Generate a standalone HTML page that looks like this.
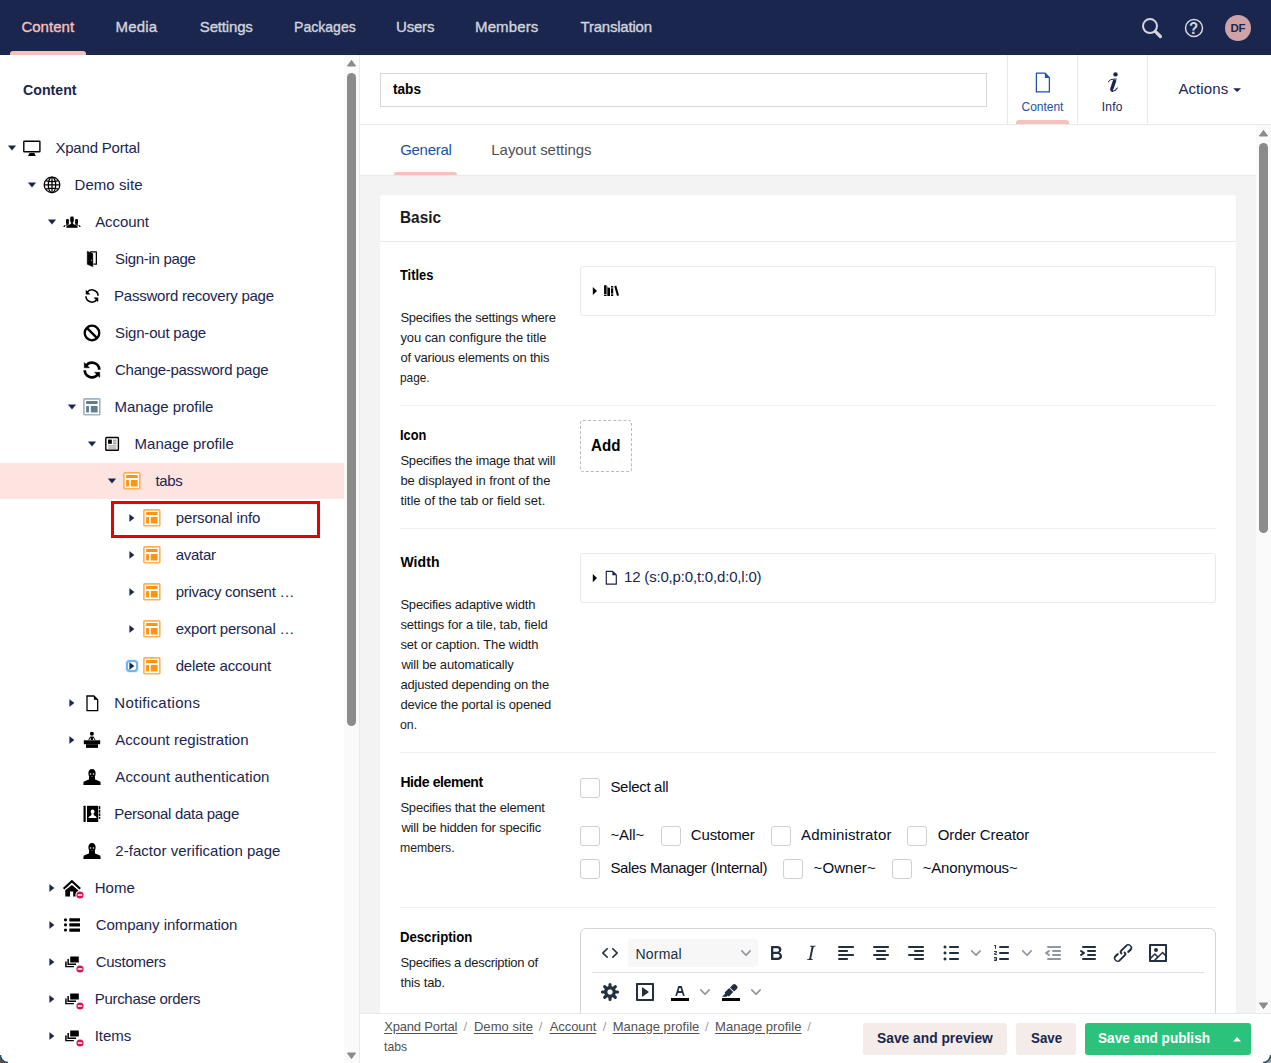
<!DOCTYPE html>
<html><head><meta charset="utf-8"><title>tabs - Umbraco</title>
<style>
*{box-sizing:border-box;margin:0;padding:0}
html,body{width:1271px;height:1063px;overflow:hidden;background:#fff;font-family:"Liberation Sans",sans-serif;}
body{position:relative}
.a{position:absolute}
.t{position:absolute;white-space:pre;line-height:20px;font-family:"Liberation Sans",sans-serif;}
svg{position:absolute;overflow:visible}
.cb{position:absolute;width:20px;height:20px;border:1px solid #d0d0d2;border-radius:3px;background:#fff}
.hl{position:absolute;height:1px;background:#f0f0f2;left:400px;width:816px}
.box{position:absolute;left:580px;width:636px;height:50px;border:1px solid #e9e9eb;border-radius:3px;background:#fff}

</style></head>
<body>
<!-- top bar -->
<div class="a" style="left:0;top:0;width:1271px;height:55px;background:#1b264f"></div>
<div class="a" style="left:10px;top:51px;width:76px;height:4px;background:#f5c1bc;border-radius:3px 3px 0 0"></div>
<!-- sidebar -->
<div class="a" style="left:0;top:55px;width:360px;height:1008px;background:#fff"></div>
<div class="a" style="left:0;top:463px;width:344px;height:36px;background:#fee4e1"></div>
<div class="a" style="left:344px;top:55px;width:15px;height:1008px;background:#fafafa"></div>
<div class="a" style="left:347px;top:73px;width:9px;height:653px;background:#8b8b8b;border-radius:4.5px"></div>
<div class="a" style="left:359px;top:55px;width:1px;height:1008px;background:#e9e9eb"></div>
<div class="a" style="left:111px;top:501px;width:209px;height:36.7px;border:3px solid #e50004"></div>
<!-- main bg -->
<div class="a" style="left:360px;top:176px;width:897px;height:838px;background:#f4f3f4"></div>
<!-- editor header -->
<div class="a" style="left:360px;top:55px;width:911px;height:69px;background:#fff"></div>
<div class="a" style="left:360px;top:124px;width:911px;height:1px;background:#e9e9eb"></div>
<div class="a" style="left:380px;top:73px;width:607px;height:34px;border:1px solid #d8d7d9;background:#fff"></div>
<div class="a" style="left:1007px;top:55px;width:1px;height:69px;background:#e9e9eb"></div>
<div class="a" style="left:1077px;top:55px;width:1px;height:69px;background:#e9e9eb"></div>
<div class="a" style="left:1147px;top:55px;width:1px;height:69px;background:#e9e9eb"></div>
<div class="a" style="left:1016px;top:120px;width:53px;height:4px;background:#f5c1bc;border-radius:3px 3px 0 0"></div>
<!-- tabs row -->
<div class="a" style="left:360px;top:125px;width:897px;height:50px;background:#fff"></div>
<div class="a" style="left:360px;top:175px;width:897px;height:1px;background:#e9e9eb"></div>
<div class="a" style="left:394px;top:172px;width:63px;height:3px;background:#f5c1bc;border-radius:3px 3px 0 0"></div>
<!-- right scrollbar -->
<div class="a" style="left:1256px;top:125px;width:15px;height:889px;background:#fafafa"></div>
<div class="a" style="left:1259px;top:143px;width:9px;height:390px;background:#8b8b8b;border-radius:4.5px"></div>
<!-- card -->
<div class="a" style="left:380px;top:195px;width:856px;height:830px;background:#fff;border-radius:3px"></div>
<div class="a" style="left:380px;top:241px;width:856px;height:1px;background:#e9e9eb"></div>
<div class="box" style="top:266px"></div>
<div class="hl" style="top:405px"></div>
<div class="a" style="left:580px;top:420px;width:52px;height:52px;border:1px dashed #bbbabf;border-radius:3px"></div>
<div class="hl" style="top:528px"></div>
<div class="box" style="top:553px"></div>
<div class="hl" style="top:752px"></div>
<div class="cb" style="left:580px;top:778px"></div>
<div class="cb" style="left:580px;top:826px"></div>
<div class="cb" style="left:661px;top:826px"></div>
<div class="cb" style="left:771px;top:826px"></div>
<div class="cb" style="left:907px;top:826px"></div>
<div class="cb" style="left:580px;top:859px"></div>
<div class="cb" style="left:783px;top:859px"></div>
<div class="cb" style="left:892px;top:859px"></div>
<div class="hl" style="top:907px"></div>
<!-- RTE -->
<div class="a" style="left:580px;top:928px;width:636px;height:120px;border:1px solid #d4d4d4;border-radius:6px;background:#fff"></div>
<div class="a" style="left:592px;top:972px;width:612px;height:1px;background:#e0e0e0"></div>
<div class="a" style="left:628px;top:939px;width:130px;height:28px;background:#f7f7f7;border-radius:3px"></div>
<!-- footer -->
<div class="a" style="left:360px;top:1014px;width:911px;height:49px;background:#fff"></div>
<div class="a" style="left:360px;top:1013px;width:911px;height:1px;background:#e9e9eb"></div>
<div class="a" style="left:863px;top:1023px;width:144px;height:32px;background:#f3ece8;border-radius:3px"></div>
<div class="a" style="left:1016px;top:1023px;width:60px;height:32px;background:#f3ece8;border-radius:3px"></div>
<div class="a" style="left:1085px;top:1023px;width:166px;height:32px;background:#2bc37c;border-radius:3px"></div>
<!-- ICONS -->
<div class="a" style="left:0;top:1055px;width:8px;height:8px;background:radial-gradient(circle at 8px 0px, rgba(0,0,0,0) 6.3px, #1a5570 7.2px, #1a5570 7.9px, #6e4a3e 8.8px)"></div>
<div class="a" style="left:1263px;top:1055px;width:8px;height:8px;background:radial-gradient(circle at 0px 0px, rgba(0,0,0,0) 6.3px, #1a5570 7.2px, #1a5570 7.9px, #a9a5a5 8.8px)"></div>
<svg style="left:7px;top:143.5px" width="10" height="8" viewBox="0 0 10 8" ><path d="M1.3 1.7 L8.7 1.7 L5 6.3 Z" fill="#1b264f" stroke="#1b264f" stroke-width="0.4" stroke-linejoin="round"/></svg>
<svg style="left:27px;top:180.5px" width="10" height="8" viewBox="0 0 10 8" ><path d="M1.3 1.7 L8.7 1.7 L5 6.3 Z" fill="#1b264f" stroke="#1b264f" stroke-width="0.4" stroke-linejoin="round"/></svg>
<svg style="left:47px;top:217.5px" width="10" height="8" viewBox="0 0 10 8" ><path d="M1.3 1.7 L8.7 1.7 L5 6.3 Z" fill="#1b264f" stroke="#1b264f" stroke-width="0.4" stroke-linejoin="round"/></svg>
<svg style="left:67px;top:402.5px" width="10" height="8" viewBox="0 0 10 8" ><path d="M1.3 1.7 L8.7 1.7 L5 6.3 Z" fill="#1b264f" stroke="#1b264f" stroke-width="0.4" stroke-linejoin="round"/></svg>
<svg style="left:87px;top:439.5px" width="10" height="8" viewBox="0 0 10 8" ><path d="M1.3 1.7 L8.7 1.7 L5 6.3 Z" fill="#1b264f" stroke="#1b264f" stroke-width="0.4" stroke-linejoin="round"/></svg>
<svg style="left:107px;top:476.5px" width="10" height="8" viewBox="0 0 10 8" ><path d="M1.3 1.7 L8.7 1.7 L5 6.3 Z" fill="#1b264f" stroke="#1b264f" stroke-width="0.4" stroke-linejoin="round"/></svg>
<div class="a" style="left:126px;top:660px;width:12px;height:12px;border:2px solid #6fb6f3;border-radius:4px;background:#fff;box-shadow:0 0 1.5px #6fb6f3"></div>
<svg style="left:128px;top:513.0px" width="8" height="10" viewBox="0 0 8 10" ><path d="M1.6 1.6 L6.1 5 L1.6 8.4 Z" fill="#1b264f" stroke="#1b264f" stroke-width="0.4" stroke-linejoin="round"/></svg>
<svg style="left:128px;top:550.0px" width="8" height="10" viewBox="0 0 8 10" ><path d="M1.6 1.6 L6.1 5 L1.6 8.4 Z" fill="#1b264f" stroke="#1b264f" stroke-width="0.4" stroke-linejoin="round"/></svg>
<svg style="left:128px;top:587.0px" width="8" height="10" viewBox="0 0 8 10" ><path d="M1.6 1.6 L6.1 5 L1.6 8.4 Z" fill="#1b264f" stroke="#1b264f" stroke-width="0.4" stroke-linejoin="round"/></svg>
<svg style="left:128px;top:624.0px" width="8" height="10" viewBox="0 0 8 10" ><path d="M1.6 1.6 L6.1 5 L1.6 8.4 Z" fill="#1b264f" stroke="#1b264f" stroke-width="0.4" stroke-linejoin="round"/></svg>
<svg style="left:128px;top:661.0px" width="8" height="10" viewBox="0 0 8 10" ><path d="M1.6 1.6 L6.1 5 L1.6 8.4 Z" fill="#1b264f" stroke="#1b264f" stroke-width="0.4" stroke-linejoin="round"/></svg>
<svg style="left:68px;top:698.0px" width="8" height="10" viewBox="0 0 8 10" ><path d="M1.6 1.6 L6.1 5 L1.6 8.4 Z" fill="#1b264f" stroke="#1b264f" stroke-width="0.4" stroke-linejoin="round"/></svg>
<svg style="left:68px;top:735.0px" width="8" height="10" viewBox="0 0 8 10" ><path d="M1.6 1.6 L6.1 5 L1.6 8.4 Z" fill="#1b264f" stroke="#1b264f" stroke-width="0.4" stroke-linejoin="round"/></svg>
<svg style="left:48px;top:883.0px" width="8" height="10" viewBox="0 0 8 10" ><path d="M1.6 1.6 L6.1 5 L1.6 8.4 Z" fill="#1b264f" stroke="#1b264f" stroke-width="0.4" stroke-linejoin="round"/></svg>
<svg style="left:48px;top:920.0px" width="8" height="10" viewBox="0 0 8 10" ><path d="M1.6 1.6 L6.1 5 L1.6 8.4 Z" fill="#1b264f" stroke="#1b264f" stroke-width="0.4" stroke-linejoin="round"/></svg>
<svg style="left:48px;top:957.0px" width="8" height="10" viewBox="0 0 8 10" ><path d="M1.6 1.6 L6.1 5 L1.6 8.4 Z" fill="#1b264f" stroke="#1b264f" stroke-width="0.4" stroke-linejoin="round"/></svg>
<svg style="left:48px;top:994.0px" width="8" height="10" viewBox="0 0 8 10" ><path d="M1.6 1.6 L6.1 5 L1.6 8.4 Z" fill="#1b264f" stroke="#1b264f" stroke-width="0.4" stroke-linejoin="round"/></svg>
<svg style="left:48px;top:1031.0px" width="8" height="10" viewBox="0 0 8 10" ><path d="M1.6 1.6 L6.1 5 L1.6 8.4 Z" fill="#1b264f" stroke="#1b264f" stroke-width="0.4" stroke-linejoin="round"/></svg>
<svg style="left:22px;top:139px" width="20" height="18" viewBox="0 0 20 18" ><rect x="1.8" y="2.2" width="16.1" height="10.5" rx="0.5" fill="none" stroke="#000" stroke-width="1.4"/><path d="M7.6 14 L12.2 14 L13.8 16.9 L6 16.9 Z" fill="#000"/></svg>
<svg style="left:42px;top:175px" width="20" height="20" viewBox="0 0 20 20" ><g fill="none" stroke="#000" stroke-width="1.25"><circle cx="10" cy="9.9" r="7.8"/><ellipse cx="10" cy="9.9" rx="3.7" ry="7.8"/><path d="M10 2.1V17.7M2.2 9.9H17.8M3.6 5.6Q10 7.6 16.4 5.6M3.6 14.2Q10 12.2 16.4 14.2"/></g></svg>
<svg style="left:62px;top:214px" width="20" height="16" viewBox="0 0 20 16" ><g fill="#000">
<rect x="4" y="5" width="2.9" height="4.9" rx="1.2"/><rect x="13.1" y="5" width="2.9" height="4.9" rx="1.2"/>
<path d="M4.4 9.6 H6.6 L7.4 11 L4 12 Z"/><path d="M15.6 9.6 H13.4 L12.6 11 L16 12 Z"/>
<path d="M1.1 12.8 L2.3 11.2 L3.7 10.9 L2.7 13 Z"/><path d="M18.9 12.8 L17.7 11.2 L16.3 10.9 L17.3 13 Z"/>
<path stroke="#fff" stroke-width="0.55" d="M7.9 4 Q7.9 2.1 10 2.1 Q12.1 2.1 12.1 4 V7 Q12.1 7.8 11.3 8.1 V9.8 L14.6 11.2 Q15.9 11.7 15.9 12.8 V14.1 H4.1 V12.8 Q4.1 11.7 5.4 11.2 L8.7 9.8 V8.1 Q7.9 7.8 7.9 7 Z"/>
</g></svg>
<svg style="left:86px;top:250px" width="13" height="18" viewBox="0 0 13 18" ><path d="M4 1.75 H10.35 V14.15 H7.4" fill="none" stroke="#000" stroke-width="1.25" stroke-linejoin="round"/><path d="M1.2 1.2 L6.9 3.6 V16.8 L1.2 14.3 Z" fill="#000" stroke="#000" stroke-width="0.4" stroke-linejoin="round"/><ellipse cx="5.5" cy="10.2" rx="0.5" ry="0.8" fill="#aaa"/></svg>
<svg style="left:0px;top:0px" width="1" height="1" viewBox="0 0 1 1" ><path d="M87.19 292.24 A6.1 6.1 0 0 1 98.10 295.70" fill="none" stroke="#000" stroke-width="1.6"/><path d="M86.00 290.30 V294.20 H89.90 Z" fill="#000" stroke="#000" stroke-width="0.5" stroke-linejoin="round"/><path d="M96.81 299.76 A6.1 6.1 0 0 1 85.90 296.30" fill="none" stroke="#000" stroke-width="1.6"/><path d="M98.00 301.70 V297.80 H94.10 Z" fill="#000" stroke="#000" stroke-width="0.5" stroke-linejoin="round"/></svg>
<svg style="left:82px;top:323px" width="20" height="20" viewBox="0 0 20 20" ><circle cx="10" cy="10" r="7.3" fill="none" stroke="#000" stroke-width="2.3"/><path d="M4.9 4.9 L15.1 15.1" stroke="#000" stroke-width="2.3"/></svg>
<svg style="left:0px;top:0px" width="1" height="1" viewBox="0 0 1 1" ><path d="M86.25 365.51 A7.3 7.3 0 0 1 99.30 369.70" fill="none" stroke="#000" stroke-width="2.7"/><path d="M84.25 362.55 V367.75 H89.45 Z" fill="#000" stroke="#000" stroke-width="0.5" stroke-linejoin="round"/><path d="M97.75 374.49 A7.3 7.3 0 0 1 84.70 370.30" fill="none" stroke="#000" stroke-width="2.7"/><path d="M99.75 377.45 V372.25 H94.55 Z" fill="#000" stroke="#000" stroke-width="0.5" stroke-linejoin="round"/></svg>
<svg style="left:83px;top:398px" width="18" height="18" viewBox="0 0 18 18" ><rect x="0.9" y="0.9" width="15.9" height="15.9" rx="0.8" fill="#fff" stroke="#9fb3bf" stroke-width="1.6"/><rect x="3.1" y="3.1" width="11.5" height="2.9" rx="0.5" fill="#5f7e90"/><rect x="3.1" y="7.9" width="2.9" height="6.6" rx="0.5" fill="#5f7e90"/><rect x="7.8" y="7.9" width="6.8" height="6.6" rx="0.5" fill="#5f7e90"/></svg>
<svg style="left:104px;top:436px" width="16" height="16" viewBox="0 0 16 16" ><rect x="1.8" y="1.5" width="12.6" height="12.7" rx="0.8" fill="#fff" stroke="#000" stroke-width="1.4"/><rect x="4.1" y="3.6" width="3.7" height="4.2" fill="#000"/><path d="M9 4.2H12.4M9 6H12.4M9 7.7H12.4M4.1 9.9H12.4M4.1 12H12.4" stroke="#777" stroke-width="0.9"/></svg>
<svg style="left:123px;top:472px" width="18" height="18" viewBox="0 0 18 18" ><rect x="0.9" y="0.9" width="15.9" height="15.9" rx="0.8" fill="#fff" stroke="#ffb24f" stroke-width="1.6"/><rect x="3.1" y="3.1" width="11.5" height="2.9" rx="0.5" fill="#ff9412"/><rect x="3.1" y="7.9" width="2.9" height="6.6" rx="0.5" fill="#ff9412"/><rect x="7.8" y="7.9" width="6.8" height="6.6" rx="0.5" fill="#ff9412"/></svg>
<svg style="left:143px;top:509px" width="18" height="18" viewBox="0 0 18 18" ><rect x="0.9" y="0.9" width="15.9" height="15.9" rx="0.8" fill="#fff" stroke="#ffb24f" stroke-width="1.6"/><rect x="3.1" y="3.1" width="11.5" height="2.9" rx="0.5" fill="#ff9412"/><rect x="3.1" y="7.9" width="2.9" height="6.6" rx="0.5" fill="#ff9412"/><rect x="7.8" y="7.9" width="6.8" height="6.6" rx="0.5" fill="#ff9412"/></svg>
<svg style="left:143px;top:546px" width="18" height="18" viewBox="0 0 18 18" ><rect x="0.9" y="0.9" width="15.9" height="15.9" rx="0.8" fill="#fff" stroke="#ffb24f" stroke-width="1.6"/><rect x="3.1" y="3.1" width="11.5" height="2.9" rx="0.5" fill="#ff9412"/><rect x="3.1" y="7.9" width="2.9" height="6.6" rx="0.5" fill="#ff9412"/><rect x="7.8" y="7.9" width="6.8" height="6.6" rx="0.5" fill="#ff9412"/></svg>
<svg style="left:143px;top:583px" width="18" height="18" viewBox="0 0 18 18" ><rect x="0.9" y="0.9" width="15.9" height="15.9" rx="0.8" fill="#fff" stroke="#ffb24f" stroke-width="1.6"/><rect x="3.1" y="3.1" width="11.5" height="2.9" rx="0.5" fill="#ff9412"/><rect x="3.1" y="7.9" width="2.9" height="6.6" rx="0.5" fill="#ff9412"/><rect x="7.8" y="7.9" width="6.8" height="6.6" rx="0.5" fill="#ff9412"/></svg>
<svg style="left:143px;top:620px" width="18" height="18" viewBox="0 0 18 18" ><rect x="0.9" y="0.9" width="15.9" height="15.9" rx="0.8" fill="#fff" stroke="#ffb24f" stroke-width="1.6"/><rect x="3.1" y="3.1" width="11.5" height="2.9" rx="0.5" fill="#ff9412"/><rect x="3.1" y="7.9" width="2.9" height="6.6" rx="0.5" fill="#ff9412"/><rect x="7.8" y="7.9" width="6.8" height="6.6" rx="0.5" fill="#ff9412"/></svg>
<svg style="left:143px;top:657px" width="18" height="18" viewBox="0 0 18 18" ><rect x="0.9" y="0.9" width="15.9" height="15.9" rx="0.8" fill="#fff" stroke="#ffb24f" stroke-width="1.6"/><rect x="3.1" y="3.1" width="11.5" height="2.9" rx="0.5" fill="#ff9412"/><rect x="3.1" y="7.9" width="2.9" height="6.6" rx="0.5" fill="#ff9412"/><rect x="7.8" y="7.9" width="6.8" height="6.6" rx="0.5" fill="#ff9412"/></svg>
<svg style="left:85.7px;top:694.6px" width="12.7" height="16.7" viewBox="0 0 12.7 16.7" ><path d="M1 1 H7.8999999999999995 L11.7 4.8 V15.7 H1 Z" fill="#fff" stroke="#000" stroke-width="1.3" stroke-linejoin="miter"/><path d="M7.8999999999999995 1 V4.8 H11.7 Z" fill="#000"/></svg>
<svg style="left:82px;top:730px" width="20" height="20" viewBox="0 0 20 20" ><g fill="#000"><circle cx="9.9" cy="3.7" r="2"/><path d="M6.2 10 L8.3 6.4 H11.5 L13.6 10 L12.6 10 L11 7.6 V10 H8.8 V7.6 L7.2 10Z"/><rect x="1.8" y="10.3" width="16.4" height="3.9"/><rect x="4" y="14.2" width="12" height="3.7"/></g></svg>
<svg style="left:82px;top:768px" width="20" height="18" viewBox="0 0 20 18" ><g fill="#000"><path d="M10 0.9 C12.4 0.9 13.6 2.6 13.6 5 C13.6 7 13 8.6 12.2 9.4 L12.4 10.8 L6.6 10.8 L7.8 9.4 C7 8.6 6.4 7 6.4 5 C6.4 2.6 7.6 0.9 10 0.9Z"/><path d="M1.4 16.9 V14.9 Q1.4 13.6 3 13 L7.6 11.2 L10 12 L12.4 11.2 L17 13 Q18.6 13.6 18.6 14.9 V16.9 Z"/><rect x="7" y="9" width="6" height="4"/></g><circle cx="8.5" cy="6" r="0.8" fill="#fff"/><circle cx="11.5" cy="6" r="0.8" fill="#fff"/><circle cx="10" cy="8.3" r="0.5" fill="#999"/></svg>
<svg style="left:82px;top:842px" width="20" height="18" viewBox="0 0 20 18" ><g fill="#000"><path d="M10 0.9 C12.4 0.9 13.6 2.6 13.6 5 C13.6 7 13 8.6 12.2 9.4 L12.4 10.8 L6.6 10.8 L7.8 9.4 C7 8.6 6.4 7 6.4 5 C6.4 2.6 7.6 0.9 10 0.9Z"/><path d="M1.4 16.9 V14.9 Q1.4 13.6 3 13 L7.6 11.2 L10 12 L12.4 11.2 L17 13 Q18.6 13.6 18.6 14.9 V16.9 Z"/><rect x="7" y="9" width="6" height="4"/></g><circle cx="8.5" cy="6" r="0.8" fill="#fff"/><circle cx="11.5" cy="6" r="0.8" fill="#fff"/><circle cx="10" cy="8.3" r="0.5" fill="#999"/></svg>
<svg style="left:82px;top:804px" width="20" height="20" viewBox="0 0 20 20" ><g fill="#000"><rect x="1.5" y="1.8" width="2.2" height="16.2" rx="0.4"/><rect x="5" y="1.8" width="11.2" height="16.2"/><rect x="16.8" y="2.2" width="1.5" height="2.8"/><rect x="16.8" y="5.8" width="1.5" height="2.8"/><rect x="16.8" y="9.4" width="1.5" height="2.8"/><rect x="16.8" y="13" width="1.5" height="1.8"/></g><g fill="#fff"><ellipse cx="10.6" cy="7.8" rx="1.9" ry="2.3"/><path d="M6.5 14 Q6.6 12.2 9 11.5 L9.6 10 H11.6 L12.2 11.5 Q14.6 12.2 14.7 14Z"/></g></svg>
<svg style="left:62px;top:878px" width="20" height="20" viewBox="0 0 20 20" ><path d="M1.6 10.8 L9.9 3.2 L18.2 10.8" fill="none" stroke="#000" stroke-width="2.2" stroke-linejoin="miter"/><path d="M3.3 12.3 L9.9 6.9 L16.2 12.3 V18.6 H11.2 V13.4 H8 V18.6 H3.3 Z" fill="#000"/></svg>
<svg style="left:75.4px;top:889.9px" width="10" height="10" viewBox="0 0 10 10" ><circle cx="5" cy="5" r="4.6" fill="#fff"/><circle cx="5" cy="5" r="3.6" fill="#d9134d"/><rect x="2.7" y="4.3" width="4.6" height="1.5" rx="0.4" fill="#fff"/></svg>
<svg style="left:62px;top:916px" width="20" height="18" viewBox="0 0 20 18" ><g fill="#000"><circle cx="3.5" cy="3.8" r="1.6"/><circle cx="3.5" cy="8.8" r="1.6"/><circle cx="3.5" cy="14" r="1.6"/><rect x="7.3" y="2.3" width="10.7" height="3.1" rx="0.3"/><rect x="7.3" y="7.2" width="10.7" height="3.2" rx="0.3"/><rect x="7.3" y="12.5" width="10.7" height="3.3" rx="0.3"/></g></svg>
<svg style="left:64px;top:954.0px" width="16" height="16" viewBox="0 0 16 16" ><g fill="#000"><rect x="6.2" y="2.5" width="8.6" height="6.1" rx="0.3"/><path d="M3.4 5.1 H4.9 V9.5 H12.1 V10.9 H3.4 Z"/><path d="M1.2 7.4 H2.7 V11.9 H9.9 V13.3 H1.2 Z"/></g></svg>
<svg style="left:75.4px;top:963.8px" width="10" height="10" viewBox="0 0 10 10" ><circle cx="5" cy="5" r="4.6" fill="#fff"/><circle cx="5" cy="5" r="3.6" fill="#d9134d"/><rect x="2.7" y="4.3" width="4.6" height="1.5" rx="0.4" fill="#fff"/></svg>
<svg style="left:64px;top:991.0px" width="16" height="16" viewBox="0 0 16 16" ><g fill="#000"><rect x="6.2" y="2.5" width="8.6" height="6.1" rx="0.3"/><path d="M3.4 5.1 H4.9 V9.5 H12.1 V10.9 H3.4 Z"/><path d="M1.2 7.4 H2.7 V11.9 H9.9 V13.3 H1.2 Z"/></g></svg>
<svg style="left:75.4px;top:1000.8px" width="10" height="10" viewBox="0 0 10 10" ><circle cx="5" cy="5" r="4.6" fill="#fff"/><circle cx="5" cy="5" r="3.6" fill="#d9134d"/><rect x="2.7" y="4.3" width="4.6" height="1.5" rx="0.4" fill="#fff"/></svg>
<svg style="left:64px;top:1028.0px" width="16" height="16" viewBox="0 0 16 16" ><g fill="#000"><rect x="6.2" y="2.5" width="8.6" height="6.1" rx="0.3"/><path d="M3.4 5.1 H4.9 V9.5 H12.1 V10.9 H3.4 Z"/><path d="M1.2 7.4 H2.7 V11.9 H9.9 V13.3 H1.2 Z"/></g></svg>
<svg style="left:75.4px;top:1037.8px" width="10" height="10" viewBox="0 0 10 10" ><circle cx="5" cy="5" r="4.6" fill="#fff"/><circle cx="5" cy="5" r="3.6" fill="#d9134d"/><rect x="2.7" y="4.3" width="4.6" height="1.5" rx="0.4" fill="#fff"/></svg>
<svg style="left:346px;top:59px" width="11" height="9" viewBox="0 0 11 9" ><path d="M5.5 1.4 L9.6 7 H1.4 Z" fill="#8b8b8b" stroke="#8b8b8b" stroke-width="1" stroke-linejoin="round"/></svg>
<svg style="left:346px;top:1051px" width="11" height="9" viewBox="0 0 11 9" ><path d="M5.5 7.6 L9.6 2 H1.4 Z" fill="#8b8b8b" stroke="#8b8b8b" stroke-width="1" stroke-linejoin="round"/></svg>
<svg style="left:1258px;top:129px" width="11" height="9" viewBox="0 0 11 9" ><path d="M5.5 1.4 L9.6 7 H1.4 Z" fill="#8b8b8b" stroke="#8b8b8b" stroke-width="1" stroke-linejoin="round"/></svg>
<svg style="left:1258px;top:1001px" width="11" height="9" viewBox="0 0 11 9" ><path d="M5.5 7.6 L9.6 2 H1.4 Z" fill="#8b8b8b" stroke="#8b8b8b" stroke-width="1" stroke-linejoin="round"/></svg><svg style="left:1138px;top:14px" width="28" height="28" viewBox="0 0 28 28" ><circle cx="12" cy="12.1" r="7" fill="none" stroke="#d4d6de" stroke-width="2"/><path d="M17.3 17.4 L22.4 22.5" stroke="#d4d6de" stroke-width="3.2" stroke-linecap="round"/></svg>
<svg style="left:1182px;top:16px" width="24" height="24" viewBox="0 0 24 24" ><circle cx="12" cy="12" r="8.5" fill="none" stroke="#d4d6de" stroke-width="1.5"/></svg>
<span class="t" style="left:1189.3px;top:18.9px;font-size:17px;font-weight:700;color:#d4d6de;line-height:20px;transform:scaleX(0.88);transform-origin:0 0">?</span>
<div class="a" style="left:1225px;top:15px;width:26px;height:26px;border-radius:13px;background:#cfa3a6"></div>
<svg style="left:1035px;top:72px" width="16" height="22" viewBox="0 0 16 22" ><path d="M1.4 1.2 H10.2 L14.4 5.6 V19.9 H1.4 Z" fill="#fff" stroke="#2152a3" stroke-width="1.3" stroke-linejoin="round"/><path d="M9.9 1.2 V5.9 H14.4 Z" fill="#2152a3"/></svg>
<svg style="left:1100px;top:68px" width="24" height="28" viewBox="0 0 24 28" ><g fill="none" stroke="#1b264f" stroke-linecap="round"><path d="M14.9 11.9 L11.9 20.6 Q11.4 22.3 13 22.3" stroke-width="3.3" stroke-linecap="butt"/><path d="M8.2 13.8 Q10.2 11 13.6 11.1 L16.4 11.1" stroke-width="1"/><path d="M12.6 22.9 Q15.3 23.3 17.2 19.9" stroke-width="1.1"/></g><circle cx="15.5" cy="6.4" r="2.2" fill="#1b264f"/></svg>
<svg style="left:1232px;top:87px" width="10" height="6" viewBox="0 0 10 6" ><path d="M1.2 1.2 H9 L5.1 5 Z" fill="#1b264f"/></svg>
<svg style="left:1232px;top:1036px" width="10" height="7" viewBox="0 0 10 7" ><path d="M1.2 5.6 H9 L5.1 1 Z" fill="#fff"/></svg>
<svg style="left:591px;top:285px" width="8" height="12" viewBox="0 0 8 12" ><path d="M1.8 2 L6 6 L1.8 10.1 Z" fill="#000"/></svg>
<svg style="left:603px;top:284px" width="18" height="14" viewBox="0 0 18 14" ><g fill="#000"><rect x="1.1" y="1.2" width="2.5" height="10.8"/><rect x="3.6" y="2.4" width="1.2" height="9.6" fill="#777"/><rect x="4.6" y="3.7" width="2.4" height="8.3"/><rect x="8" y="2.1" width="2.2" height="9.9"/><path d="M11.3 2.2 L13.2 1.5 L16 11.3 L14 12 Z"/></g><g fill="#fff"><rect x="1.1" y="10" width="2.5" height="0.7"/><rect x="8" y="3.6" width="2.2" height="0.7"/><rect x="8" y="9.6" width="2.2" height="0.7"/></g></svg>
<svg style="left:591px;top:572px" width="8" height="12" viewBox="0 0 8 12" ><path d="M1.8 2 L6 6.1 L1.8 10.2 Z" fill="#000"/></svg>
<svg style="left:605.4px;top:569.8px" width="13" height="16" viewBox="0 0 13 16" ><path d="M1.3 1.3 H7.6 L11.3 5 V14.2 H1.3 Z" fill="#fff" stroke="#1b264f" stroke-width="1.2" stroke-linejoin="round"/><path d="M7.4 1.3 V5.2 H11.3 Z" fill="#1b264f"/></svg>
<svg style="left:597.8px;top:941px" width="24" height="24" viewBox="0 0 24 24" ><path fill="#222f3e"  d="M9.800 15.700c.3.300.3.800 0 1-.3.400-.9.400-1.200 0l-4.400-4.100a.8.800 0 0 1 0-1.200l4.400-4.200c.3-.3.900-.3 1.200 0 .3.300.3.800 0 1.100L6 12l3.800 3.700ZM14.200 15.700c-.3.300-.3.800 0 1 .4.400.9.400 1.200 0l4.400-4.100c.3-.3.300-.9 0-1.200l-4.400-4.200a.8.800 0 0 0-1.200 0c-.3.300-.3.800 0 1.100L18 12l-3.800 3.700Z"/></svg>
<svg style="left:741px;top:948.4px" width="10" height="10" viewBox="0 0 10 10" ><path fill="#8f959d" d="M8.700 2.200c.3-.3.800-.3 1 0 .4.400.4.900 0 1.200L5.700 7.800c-.3.300-.9.300-1.200 0L.2 3.400a.8.800 0 0 1 0-1.200c.3-.3.800-.3 1.100 0L5 6l3.700-3.800Z"/></svg>
<svg style="left:764.4px;top:941px" width="24" height="24" viewBox="0 0 24 24" ><path fill="#222f3e" fill-rule="evenodd" d="M7.800 19c-.3 0-.5 0-.6-.2l-.2-.5V5.700c0-.2 0-.4.200-.5l.6-.2h5c1.500 0 2.700.3 3.500 1 .7.600 1.100 1.400 1.100 2.500a3 3 0 0 1-.6 1.900c-.4.600-1 1-1.600 1.200.4.100.9.300 1.300.6s.8.700 1 1.200c.4.400.5 1 .5 1.600 0 1.300-.4 2.300-1.300 3-.8.700-2.100 1-3.800 1H7.800Zm5-8.300c.6 0 1.200-.1 1.600-.5.400-.3.600-.7.600-1.300 0-1.100-.8-1.700-2.300-1.700H9.300v3.500h3.400Zm.5 6c.7 0 1.300-.1 1.700-.4.400-.4.600-.9.600-1.500s-.2-1-.7-1.400c-.4-.3-1-.4-2-.4H9.400v3.800h4Z"/></svg>
<svg style="left:799.4px;top:941px" width="24" height="24" viewBox="0 0 24 24" ><path fill="#222f3e"  d="m16.700 4.700-.1.900h-.3c-.6 0-1 0-1.400.3-.3.300-.4.600-.5 1.100l-2.100 9.800v.6c0 .5.400.8 1.400.8h.2l-.2.800H8l.2-.8h.2c1.100 0 1.800-.5 2-1.500l2-9.800.1-.5c0-.6-.4-.8-1.400-.8h-.3l.2-.9h5.800Z"/></svg>
<svg style="left:834px;top:941px" width="24" height="24" viewBox="0 0 24 24" ><path fill="#222f3e"  d="M5 5h14c.6 0 1 .4 1 1s-.4 1-1 1H5a1 1 0 1 1 0-2Zm0 4h8c.6 0 1 .4 1 1s-.4 1-1 1H5a1 1 0 1 1 0-2Zm0 8h8c.6 0 1 .4 1 1s-.4 1-1 1H5a1 1 0 0 1 0-2Zm0-4h14c.6 0 1 .4 1 1s-.4 1-1 1H5a1 1 0 0 1 0-2Z"/></svg>
<svg style="left:869px;top:941px" width="24" height="24" viewBox="0 0 24 24" ><path fill="#222f3e"  d="M5 5h14c.6 0 1 .4 1 1s-.4 1-1 1H5a1 1 0 1 1 0-2Zm3 4h8c.6 0 1 .4 1 1s-.4 1-1 1H8a1 1 0 1 1 0-2Zm0 8h8c.6 0 1 .4 1 1s-.4 1-1 1H8a1 1 0 0 1 0-2Zm-3-4h14c.6 0 1 .4 1 1s-.4 1-1 1H5a1 1 0 0 1 0-2Z"/></svg>
<svg style="left:904px;top:941px" width="24" height="24" viewBox="0 0 24 24" ><path fill="#222f3e"  d="M5 5h14c.6 0 1 .4 1 1s-.4 1-1 1H5a1 1 0 1 1 0-2Zm6 4h8c.6 0 1 .4 1 1s-.4 1-1 1h-8a1 1 0 0 1 0-2Zm0 8h8c.6 0 1 .4 1 1s-.4 1-1 1h-8a1 1 0 0 1 0-2Zm-6-4h14c.6 0 1 .4 1 1s-.4 1-1 1H5a1 1 0 0 1 0-2Z"/></svg>
<svg style="left:939px;top:941px" width="24" height="24" viewBox="0 0 24 24" ><path fill="#222f3e"  d="M11 5h8c.6 0 1 .4 1 1s-.4 1-1 1h-8a1 1 0 0 1 0-2Zm0 6h8c.6 0 1 .4 1 1s-.4 1-1 1h-8a1 1 0 0 1 0-2Zm0 6h8c.6 0 1 .4 1 1s-.4 1-1 1h-8a1 1 0 0 1 0-2ZM4.500 6c0-.4.100-.8.400-1 .3-.4.700-.5 1.100-.5.400 0 .8.100 1 .400.400.300.500.700.500 1.100 0 .4-.1.800-.4 1-.3.400-.7.500-1.100.5-.4 0-.8-.1-1-.4-.4-.3-.5-.7-.5-1.100Zm0 6c0-.4.100-.8.400-1 .3-.4.700-.5 1.100-.5.400 0 .8.100 1 .400.400.300.500.700.500 1.100 0 .4-.1.800-.4 1-.3.400-.7.500-1.100.5-.4 0-.8-.1-1-.4-.4-.3-.5-.7-.5-1.100Zm0 6c0-.4.100-.8.400-1 .3-.4.700-.5 1.100-.5.400 0 .8.100 1 .400.400.300.500.700.500 1.100 0 .4-.1.800-.4 1-.3.400-.7.500-1.100.5-.4 0-.8-.1-1-.4-.4-.3-.5-.7-.5-1.100Z"/></svg>
<svg style="left:971px;top:948.4px" width="10" height="10" viewBox="0 0 10 10" ><path fill="#8f959d" d="M8.700 2.200c.3-.3.800-.3 1 0 .4.400.4.900 0 1.200L5.700 7.800c-.3.300-.9.300-1.200 0L.2 3.400a.8.800 0 0 1 0-1.200c.3-.3.800-.3 1.100 0L5 6l3.700-3.800Z"/></svg>
<svg style="left:990px;top:941px" width="24" height="24" viewBox="0 0 24 24" ><path fill="#222f3e"  d="M10 17h8c.6 0 1 .4 1 1s-.4 1-1 1h-8a1 1 0 0 1 0-2Zm0-6h8c.6 0 1 .4 1 1s-.4 1-1 1h-8a1 1 0 0 1 0-2Zm0-6h8c.6 0 1 .4 1 1s-.4 1-1 1h-8a1 1 0 1 1 0-2ZM6 4v3.500c0 .3-.2.500-.5.500a.5.500 0 0 1-.5-.5V5h-.5a.5.500 0 0 1 0-1H6Zm-1 8.800.2.200h1.300c.3 0 .5.200.5.500s-.2.500-.5.500H4.900a1 1 0 0 1-.9-1V13c0-.4.300-.8.600-1l1.200-.400.200-.300a.2.200 0 0 0-.2-.2H4.500a.5.500 0 0 1-.5-.500c0-.3.200-.5.500-.5h1.600c.5 0 .9.400.9 1v.1c0 .4-.3.800-.6 1l-1.200.4-.2.300ZM7 17v2c0 .6-.4 1-1 1H4.500a.5.500 0 0 1 0-1h1.200c.2 0 .3-.1.300-.3 0-.2-.1-.3-.3-.3H4.400a.4.400 0 1 1 0-.8h1.300c.2 0 .3-.1.300-.3 0-.2-.1-.3-.3-.3H4.500a.5.500 0 1 1 0-1H6c.6 0 1 .4 1 1Z"/></svg>
<svg style="left:1021.9px;top:948.4px" width="10" height="10" viewBox="0 0 10 10" ><path fill="#8f959d" d="M8.700 2.200c.3-.3.800-.3 1 0 .4.400.4.900 0 1.200L5.700 7.800c-.3.300-.9.300-1.200 0L.2 3.400a.8.800 0 0 1 0-1.200c.3-.3.800-.3 1.100 0L5 6l3.700-3.800Z"/></svg>
<svg style="left:1041px;top:941px" width="24" height="24" viewBox="0 0 24 24" ><path fill="#9097a0"  d="M7 5h12c.6 0 1 .4 1 1s-.4 1-1 1H7a1 1 0 1 1 0-2Zm5 4h7c.6 0 1 .4 1 1s-.4 1-1 1h-7a1 1 0 0 1 0-2Zm0 4h7c.6 0 1 .4 1 1s-.4 1-1 1h-7a1 1 0 0 1 0-2Zm-5 4h12a1 1 0 0 1 0 2H7a1 1 0 0 1 0-2Zm1.600-3.800a1 1 0 0 1-1.200 1.600l-3-2a1 1 0 0 1 0-1.600l3-2a1 1 0 0 1 1.200 1.600L6.800 12l1.800 1.200Z"/></svg>
<svg style="left:1076px;top:941px" width="24" height="24" viewBox="0 0 24 24" ><path fill="#222f3e"  d="M7 5h12c.6 0 1 .4 1 1s-.4 1-1 1H7a1 1 0 1 1 0-2Zm5 4h7c.6 0 1 .4 1 1s-.4 1-1 1h-7a1 1 0 0 1 0-2Zm0 4h7c.6 0 1 .4 1 1s-.4 1-1 1h-7a1 1 0 0 1 0-2Zm-5 4h12a1 1 0 0 1 0 2H7a1 1 0 0 1 0-2Zm-2.600-3.800L6.200 12l-1.800-1.200a1 1 0 0 1 1.200-1.600l3 2a1 1 0 0 1 0 1.600l-3 2a1 1 0 1 1-1.200-1.600Z"/></svg>
<svg style="left:1111px;top:941px" width="24" height="24" viewBox="0 0 24 24" ><path fill="#222f3e" d="M6.2 12.3a1 1 0 0 1 1.400 1.400l-2.100 2a2 2 0 1 0 2.700 2.800l4.800-4.800a1 1 0 0 0 0-1.400 1 1 0 1 1 1.400-1.400 2.900 2.900 0 0 1 0 4.100l-4.800 4.800a4 4 0 0 1-5.700-5.600l2.300-1.900Zm11.600-.6a1 1 0 0 1-1.400-1.400l2-2a2 2 0 1 0-2.600-2.800l-4.800 4.800a1 1 0 0 0 0 1.400 1 1 0 1 1-1.400 1.400 2.900 2.900 0 0 1 0-4.100l4.800-4.800a4 4 0 0 1 5.700 5.600l-2.300 1.900Z"/></svg>
<svg style="left:1146px;top:941px" width="24" height="24" viewBox="0 0 24 24" ><path fill="#222f3e" fill-rule="nonzero" d="m5 15.700 3.300-3.200c.3-.3.700-.3 1 0L12 15l4.100-4c.3-.4.800-.4 1 0l2 1.900V5H5v10.700ZM5 18V19h3l2.800-2.900-2-2L5 17.900Zm14-3-2.500-2.400-6.400 6.500H19v-4ZM4 3h16c.6 0 1 .4 1 1v16c0 .6-.4 1-1 1H4a1 1 0 0 1-1-1V4c0-.6.400-1 1-1Zm6 8a2 2 0 1 0 0-4 2 2 0 0 0 0 4Z"/></svg>
<svg style="left:600.2px;top:982px" width="20" height="20" viewBox="0 0 20 20" ><path d="M14.00 10.00L17.55 10.00M12.83 12.83L15.34 15.34M10.00 14.00L10.00 17.55M7.17 12.83L4.66 15.34M6.00 10.00L2.45 10.00M7.17 7.17L4.66 4.66M10.00 6.00L10.00 2.45M12.83 7.17L15.34 4.66" stroke="#222f3e" stroke-width="3.1" stroke-linecap="round" fill="none"/><circle cx="10" cy="10" r="4.45" fill="none" stroke="#222f3e" stroke-width="3"/></svg>
<svg style="left:633px;top:980px" width="24" height="24" viewBox="0 0 24 24" ><path fill="#222f3e" fill-rule="evenodd" d="M4 3h16c.6 0 1 .4 1 1v16c0 .6-.4 1-1 1H4a1 1 0 0 1-1-1V4c0-.6.400-1 1-1Zm1 2v14h14V5H5Zm4.800 2.600 5.600 4a.5.500 0 0 1 0 .8l-5.600 4A.5.500 0 0 1 9 16V8a.5.500 0 0 1 .8-.4Z"/></svg>
<svg style="left:668px;top:980px" width="24" height="24" viewBox="0 0 24 24" ><path fill="#000" d="M3 18h18v3H3z"/><path fill="#222f3e" fill-rule="evenodd" d="M8.700 16h-.8a.5.500 0 0 1-.5-.6l2.700-9c.1-.3.300-.4.500-.4h2.800c.2 0 .4.100.5.400l2.700 9a.5.500 0 0 1-.5.600h-.8a.5.500 0 0 1-.4-.4l-.7-2.200c0-.3-.3-.4-.5-.4h-3.400c-.2 0-.4.100-.5.400l-.7 2.200c0 .3-.2.400-.4.400Zm2.600-7.600-.6 2a.5.500 0 0 0 .5.600h1.600a.5.500 0 0 0 .5-.6l-.6-2c0-.3-.3-.4-.5-.4h-.4c-.2 0-.4.100-.5.400Z"/></svg>
<svg style="left:700.1px;top:987.2px" width="10" height="10" viewBox="0 0 10 10" ><path fill="#8f959d" d="M8.700 2.200c.3-.3.800-.3 1 0 .4.400.4.900 0 1.200L5.700 7.800c-.3.300-.9.300-1.200 0L.2 3.400a.8.800 0 0 1 0-1.200c.3-.3.800-.3 1.100 0L5 6l3.700-3.800Z"/></svg>
<svg style="left:719px;top:980px" width="24" height="24" viewBox="0 0 24 24" ><path fill="#000" d="M3 18h18v3H3z"/><path fill="#222f3e" fill-rule="nonzero" d="M7.700 16.700H3l3.300-3.300-.7-.8L10.200 8l4 4.100-4 4.200c-.2.200-.6.200-.8 0l-.6-.7-1.100 1.100zm5-7.500L11 7.400l3-2.900a2 2 0 0 1 2.600 0L18 6c.7.700.7 2 0 2.700l-2.900 2.900-1.800-1.800-.500-.600"/></svg>
<svg style="left:751px;top:987.2px" width="10" height="10" viewBox="0 0 10 10" ><path fill="#8f959d" d="M8.700 2.200c.3-.3.800-.3 1 0 .4.400.4.900 0 1.200L5.700 7.800c-.3.300-.9.300-1.200 0L.2 3.400a.8.800 0 0 1 0-1.200c.3-.3.800-.3 1.100 0L5 6l3.700-3.800Z"/></svg>
<!-- text -->
<span class="t" style="left:21.40px;top:17.30px;font-size:15px;color:#f5c1bc;letter-spacing:0.022px;-webkit-text-stroke:0.35px currentColor;">Content</span>
<span class="t" style="left:115.60px;top:17.30px;font-size:15px;color:#d1d4dc;letter-spacing:0.172px;-webkit-text-stroke:0.35px currentColor;">Media</span>
<span class="t" style="left:199.80px;top:17.30px;font-size:15px;color:#d1d4dc;letter-spacing:-0.171px;-webkit-text-stroke:0.35px currentColor;">Settings</span>
<span class="t" style="left:293.56px;top:17.30px;font-size:15px;color:#d1d4dc;transform:scaleX(0.9383);transform-origin:0 0;-webkit-text-stroke:0.35px currentColor;">Packages</span>
<span class="t" style="left:396.00px;top:17.30px;font-size:15px;color:#d1d4dc;letter-spacing:-0.192px;-webkit-text-stroke:0.35px currentColor;">Users</span>
<span class="t" style="left:475.00px;top:17.30px;font-size:15px;color:#d1d4dc;letter-spacing:0.131px;-webkit-text-stroke:0.35px currentColor;">Members</span>
<span class="t" style="left:580.50px;top:17.30px;font-size:15px;color:#d1d4dc;letter-spacing:-0.210px;-webkit-text-stroke:0.35px currentColor;">Translation</span>
<span class="t" style="left:1230.60px;top:18.12px;font-size:11.5px;color:#1b264f;letter-spacing:-0.305px;font-weight:700;">DF</span>
<span class="t" style="left:22.50px;top:80.40px;font-size:15px;color:#1b264f;transform:scaleX(0.9443);transform-origin:0 0;font-weight:700;">Content</span>
<span class="t" style="left:55.40px;top:137.80px;font-size:15px;color:#1b264f;letter-spacing:-0.190px;">Xpand Portal</span>
<span class="t" style="left:74.50px;top:174.80px;font-size:15px;color:#1b264f;letter-spacing:0.065px;">Demo site</span>
<span class="t" style="left:95.20px;top:211.80px;font-size:15px;color:#1b264f;letter-spacing:-0.072px;">Account</span>
<span class="t" style="left:115.10px;top:248.80px;font-size:15px;color:#1b264f;letter-spacing:-0.317px;">Sign-in page</span>
<span class="t" style="left:114.10px;top:285.80px;font-size:15px;color:#1b264f;letter-spacing:-0.245px;">Password recovery page</span>
<span class="t" style="left:115.10px;top:322.80px;font-size:15px;color:#1b264f;letter-spacing:-0.197px;">Sign-out page</span>
<span class="t" style="left:115.10px;top:359.80px;font-size:15px;color:#1b264f;letter-spacing:-0.307px;">Change-password page</span>
<span class="t" style="left:114.50px;top:396.80px;font-size:15px;color:#1b264f;letter-spacing:-0.022px;">Manage profile</span>
<span class="t" style="left:134.60px;top:433.80px;font-size:15px;color:#1b264f;letter-spacing:-0.007px;">Manage profile</span>
<span class="t" style="left:155.40px;top:470.80px;font-size:15px;color:#1b264f;letter-spacing:-0.317px;">tabs</span>
<span class="t" style="left:175.70px;top:507.80px;font-size:15px;color:#1b264f;letter-spacing:-0.104px;">personal info</span>
<span class="t" style="left:175.70px;top:544.80px;font-size:15px;color:#1b264f;letter-spacing:-0.279px;">avatar</span>
<span class="t" style="left:175.70px;top:581.80px;font-size:15px;color:#1b264f;letter-spacing:-0.293px;">privacy consent …</span>
<span class="t" style="left:175.70px;top:618.80px;font-size:15px;color:#1b264f;letter-spacing:-0.241px;">export personal …</span>
<span class="t" style="left:175.70px;top:655.80px;font-size:15px;color:#1b264f;letter-spacing:-0.170px;">delete account</span>
<span class="t" style="left:114.30px;top:692.80px;font-size:15px;color:#1b264f;letter-spacing:0.333px;">Notifications</span>
<span class="t" style="left:115.30px;top:729.80px;font-size:15px;color:#1b264f;letter-spacing:0.035px;">Account registration</span>
<span class="t" style="left:115.30px;top:766.80px;font-size:15px;color:#1b264f;letter-spacing:0.113px;">Account authentication</span>
<span class="t" style="left:114.30px;top:803.80px;font-size:15px;color:#1b264f;letter-spacing:-0.303px;">Personal data page</span>
<span class="t" style="left:115.30px;top:840.80px;font-size:15px;color:#1b264f;letter-spacing:0.036px;">2-factor verification page</span>
<span class="t" style="left:94.70px;top:877.80px;font-size:15px;color:#1b264f;letter-spacing:0.077px;">Home</span>
<span class="t" style="left:95.70px;top:914.80px;font-size:15px;color:#1b264f;letter-spacing:-0.046px;">Company information</span>
<span class="t" style="left:95.70px;top:951.80px;font-size:15px;color:#1b264f;letter-spacing:-0.277px;">Customers</span>
<span class="t" style="left:94.70px;top:988.80px;font-size:15px;color:#1b264f;letter-spacing:-0.297px;">Purchase orders</span>
<span class="t" style="left:94.70px;top:1025.80px;font-size:15px;color:#1b264f;letter-spacing:-0.043px;">Items</span>
<span class="t" style="left:392.50px;top:78.50px;font-size:15px;color:#000;transform:scaleX(0.9082);transform-origin:0 0;font-weight:700;">tabs</span>
<span class="t" style="left:1021.60px;top:96.74px;font-size:12px;color:#2152a3;letter-spacing:-0.033px;">Content</span>
<span class="t" style="left:1101.80px;top:96.74px;font-size:12px;color:#1b264f;letter-spacing:0.186px;">Info</span>
<span class="t" style="left:1178.40px;top:78.90px;font-size:15px;color:#1b264f;letter-spacing:0.102px;">Actions</span>
<span class="t" style="left:400.20px;top:139.50px;font-size:15px;color:#2152a3;letter-spacing:-0.289px;">General</span>
<span class="t" style="left:491.30px;top:139.50px;font-size:15px;color:#515054;letter-spacing:-0.050px;">Layout settings</span>
<span class="t" style="left:399.50px;top:207.71px;font-size:17px;color:#1b1b1b;transform:scaleX(0.9041);transform-origin:0 0;font-weight:700;">Basic</span>
<span class="t" style="left:400.40px;top:265.15px;font-size:14px;color:#000;transform:scaleX(0.9171);transform-origin:0 0;font-weight:700;">Titles</span>
<span class="t" style="left:400.40px;top:307.50px;font-size:13px;color:#1b1b1b;letter-spacing:-0.235px;">Specifies the settings where</span>
<span class="t" style="left:400.40px;top:327.50px;font-size:13px;color:#1b1b1b;letter-spacing:-0.078px;">you can configure the title</span>
<span class="t" style="left:400.40px;top:347.50px;font-size:13px;color:#1b1b1b;letter-spacing:-0.213px;">of various elements on this</span>
<span class="t" style="left:400.40px;top:367.50px;font-size:13px;color:#1b1b1b;transform:scaleX(0.9117);transform-origin:0 0;">page.</span>
<span class="t" style="left:400.40px;top:425.35px;font-size:14px;color:#000;transform:scaleX(0.9140);transform-origin:0 0;font-weight:700;">Icon</span>
<span class="t" style="left:400.40px;top:450.50px;font-size:13px;color:#1b1b1b;letter-spacing:-0.194px;">Specifies the image that will</span>
<span class="t" style="left:400.40px;top:470.50px;font-size:13px;color:#1b1b1b;letter-spacing:-0.091px;">be displayed in front of the</span>
<span class="t" style="left:400.40px;top:490.50px;font-size:13px;color:#1b1b1b;letter-spacing:-0.012px;">title of the tab or field set.</span>
<span class="t" style="left:591.40px;top:435.91px;font-size:17px;color:#000;transform:scaleX(0.8910);transform-origin:0 0;font-weight:700;">Add</span>
<span class="t" style="left:400.40px;top:551.95px;font-size:14px;color:#000;letter-spacing:0.101px;font-weight:700;">Width</span>
<span class="t" style="left:400.40px;top:594.70px;font-size:13px;color:#1b1b1b;letter-spacing:-0.193px;">Specifies adaptive width</span>
<span class="t" style="left:400.40px;top:614.70px;font-size:13px;color:#1b1b1b;letter-spacing:-0.126px;">settings for a tile, tab, field</span>
<span class="t" style="left:400.40px;top:634.70px;font-size:13px;color:#1b1b1b;letter-spacing:-0.137px;">set or caption. The width</span>
<span class="t" style="left:401.40px;top:654.70px;font-size:13px;color:#1b1b1b;letter-spacing:-0.160px;">will be automatically</span>
<span class="t" style="left:400.40px;top:674.70px;font-size:13px;color:#1b1b1b;letter-spacing:-0.188px;">adjusted depending on the</span>
<span class="t" style="left:400.40px;top:694.70px;font-size:13px;color:#1b1b1b;letter-spacing:-0.171px;">device the portal is opened</span>
<span class="t" style="left:400.40px;top:714.70px;font-size:13px;color:#1b1b1b;transform:scaleX(0.9450);transform-origin:0 0;">on.</span>
<span class="t" style="left:624.00px;top:566.60px;font-size:15px;color:#1b264f;letter-spacing:-0.180px;">12 (s:0,p:0,t:0,d:0,l:0)</span>
<span class="t" style="left:400.40px;top:772.15px;font-size:14px;color:#000;letter-spacing:-0.398px;font-weight:700;">Hide element</span>
<span class="t" style="left:400.40px;top:797.70px;font-size:13px;color:#1b1b1b;letter-spacing:-0.207px;">Specifies that the element</span>
<span class="t" style="left:401.40px;top:817.70px;font-size:13px;color:#1b1b1b;letter-spacing:-0.178px;">will be hidden for specific</span>
<span class="t" style="left:400.40px;top:837.70px;font-size:13px;color:#1b1b1b;transform:scaleX(0.9444);transform-origin:0 0;">members.</span>
<span class="t" style="left:610.40px;top:776.80px;font-size:15px;color:#0a0d24;letter-spacing:-0.304px;">Select all</span>
<span class="t" style="left:610.40px;top:824.80px;font-size:15px;color:#0a0d24;letter-spacing:-0.107px;">~All~</span>
<span class="t" style="left:690.80px;top:824.80px;font-size:15px;color:#0a0d24;letter-spacing:-0.160px;">Customer</span>
<span class="t" style="left:801.10px;top:824.80px;font-size:15px;color:#0a0d24;letter-spacing:0.161px;">Administrator</span>
<span class="t" style="left:937.80px;top:824.80px;font-size:15px;color:#0a0d24;letter-spacing:-0.094px;">Order Creator</span>
<span class="t" style="left:610.40px;top:857.80px;font-size:15px;color:#0a0d24;letter-spacing:-0.347px;">Sales Manager (Internal)</span>
<span class="t" style="left:813.60px;top:857.80px;font-size:15px;color:#0a0d24;letter-spacing:0.060px;">~Owner~</span>
<span class="t" style="left:922.70px;top:857.80px;font-size:15px;color:#0a0d24;letter-spacing:-0.177px;">~Anonymous~</span>
<span class="t" style="left:400.40px;top:927.15px;font-size:14px;color:#000;transform:scaleX(0.9390);transform-origin:0 0;font-weight:700;">Description</span>
<span class="t" style="left:400.40px;top:952.50px;font-size:13px;color:#1b1b1b;letter-spacing:-0.272px;">Specifies a description of</span>
<span class="t" style="left:400.40px;top:972.50px;font-size:13px;color:#1b1b1b;letter-spacing:-0.114px;">this tab.</span>
<span class="t" style="left:635.50px;top:943.95px;font-size:14px;color:#222f3e;letter-spacing:0.219px;">Normal</span>
<span class="t" style="left:384.20px;top:1017.00px;font-size:13px;color:#515054;letter-spacing:-0.170px;text-decoration:underline;text-underline-offset:1.5px;">Xpand Portal</span>
<span class="t" style="left:473.90px;top:1017.00px;font-size:13px;color:#515054;letter-spacing:0.064px;text-decoration:underline;text-underline-offset:1.5px;">Demo site</span>
<span class="t" style="left:549.70px;top:1017.00px;font-size:13px;color:#515054;letter-spacing:-0.060px;text-decoration:underline;text-underline-offset:1.5px;">Account</span>
<span class="t" style="left:612.70px;top:1017.00px;font-size:13px;color:#515054;letter-spacing:0.049px;text-decoration:underline;text-underline-offset:1.5px;">Manage profile</span>
<span class="t" style="left:715.10px;top:1017.00px;font-size:13px;color:#515054;letter-spacing:0.026px;text-decoration:underline;text-underline-offset:1.5px;">Manage profile</span>
<span class="t" style="left:463.60px;top:1017.00px;font-size:13px;color:#a2a1a6;letter-spacing:0.000px;">/</span>
<span class="t" style="left:538.70px;top:1017.00px;font-size:13px;color:#a2a1a6;letter-spacing:0.000px;">/</span>
<span class="t" style="left:602.70px;top:1017.00px;font-size:13px;color:#a2a1a6;letter-spacing:0.000px;">/</span>
<span class="t" style="left:705.10px;top:1017.00px;font-size:13px;color:#a2a1a6;letter-spacing:0.000px;">/</span>
<span class="t" style="left:807.20px;top:1017.00px;font-size:13px;color:#a2a1a6;letter-spacing:0.000px;">/</span>
<span class="t" style="left:384.40px;top:1036.80px;font-size:13px;color:#515054;transform:scaleX(0.9413);transform-origin:0 0;">tabs</span>
<span class="t" style="left:877.30px;top:1027.70px;font-size:15px;color:#1b264f;transform:scaleX(0.9198);transform-origin:0 0;font-weight:700;">Save and preview</span>
<span class="t" style="left:1030.60px;top:1027.70px;font-size:15px;color:#1b264f;transform:scaleX(0.8879);transform-origin:0 0;font-weight:700;">Save</span>
<span class="t" style="left:1098.20px;top:1027.70px;font-size:15px;color:#fff;transform:scaleX(0.9083);transform-origin:0 0;font-weight:700;">Save and publish</span>
</body></html>
